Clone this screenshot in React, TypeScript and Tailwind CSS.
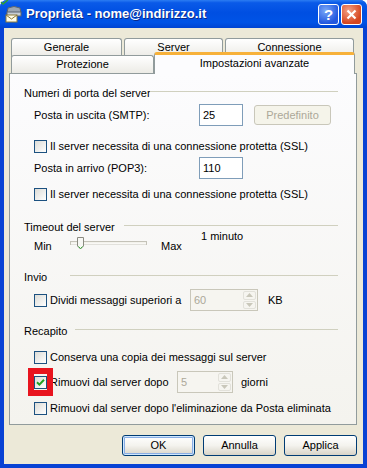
import React from 'react';

const font = "font-['Liberation_Sans',Arial,sans-serif]";

const Check = ({ checked = false }: { checked?: boolean }) => (
  <span className="w-[13px] h-[13px] shrink-0 border border-[#1C5180] bg-gradient-to-br from-[#DCDCD7] to-white flex items-center justify-center">
    {checked && (
      <svg width="9" height="9" viewBox="0 0 9 9">
        <path d="M1 4.2 L3.4 6.6 L8 1.8" fill="none" stroke="#21A121" strokeWidth="2" />
      </svg>
    )}
  </span>
);

const CheckRow = ({ label, checked = false }: { label: string; checked?: boolean }) => (
  <div className="flex items-center h-[16px] pl-[10px] gap-[3px]">
    <Check checked={checked} />
    <span className="whitespace-nowrap">{label}</span>
  </div>
);

// group title with the etched line on its right
const GroupHeader = ({ label, labelW }: { label: string; labelW: string }) => (
  <div className="flex items-center h-[14px] pr-[18px]">
    <span className={`${labelW} shrink-0 whitespace-nowrap`}>{label}</span>
    <div className="flex-1 h-px bg-[#D0D0BF] -mt-[3px]" />
  </div>
);

const TextBox = ({ value }: { value: string }) => (
  <div className="w-[44px] h-[22px] border border-[#7F9DB9] bg-white flex items-center pl-[3px]">{value}</div>
);

const Spinner = ({ value, w }: { value: string; w: string }) => (
  <div className={`${w} h-[22px] border border-[#C9C7BA] bg-[#F6F5F0] flex`}>
    <div className="flex-1 flex items-center pl-[3px] text-[#ACA899]">{value}</div>
    <div className="w-[15px] flex flex-col p-px gap-px">
      <div className="flex-1 border border-[#E2E1DA] rounded-[2px] flex items-center justify-center">
        <svg width="7" height="4" viewBox="0 0 7 4"><path d="M0 4 L3.5 0 L7 4Z" fill="#C9C7BA" /></svg>
      </div>
      <div className="flex-1 border border-[#E2E1DA] rounded-[2px] flex items-center justify-center">
        <svg width="7" height="4" viewBox="0 0 7 4"><path d="M0 0 L3.5 4 L7 0Z" fill="#C9C7BA" /></svg>
      </div>
    </div>
  </div>
);

const Tab = ({ label, w }: { label: string; w: string }) => (
  <div className={`${w} h-full border border-b-0 border-[#919B9C] rounded-t-[3px] bg-gradient-to-b from-white to-[#ECEBE6] flex items-center justify-center pb-[2px]`}>
    {label}
  </div>
);

const DlgButton = ({ label, isDefault = false }: { label: string; isDefault?: boolean }) => (
  <button
    className={`w-[73px] h-[21px] border border-[#003C74] rounded-[3px] bg-gradient-to-b from-white via-[#F4F3EE] to-[#D8D4C8] flex items-center justify-center ${
      isDefault ? 'shadow-[inset_0_0_0_1px_#CEE7FF,inset_0_0_0_2px_#89ADE4]' : ''
    }`}
  >
    {label}
  </button>
);

const TitleIcon = () => (
  <svg width="18" height="17" viewBox="0 0 18 17">
    <path d="M3 2 Q9 -1 15 2 L16 7 L2 7 Z" fill="#9DA7B2" stroke="#5B6570" strokeWidth="1" />
    <rect x="2" y="6" width="14" height="4" fill="#C6CDD4" stroke="#5B6570" strokeWidth="1" />
    <rect x="1" y="9" width="11" height="7" fill="#FFFDE8" stroke="#8C7A3A" strokeWidth="1" />
    <path d="M1 9 L6.5 13 L12 9" fill="none" stroke="#8C7A3A" strokeWidth="1" />
  </svg>
);

export default function App() {
  return (
    <div className={`${font} text-[11px] text-black bg-white w-[367px] h-[468px] relative`}>
      <svg className="absolute left-0 top-0 z-20" width="9" height="5" viewBox="0 0 9 5">
        <path d="M1 2 L3 4 L8 0" fill="none" stroke="#2FA02F" strokeWidth="1.5" />
      </svg>
      <div className="w-[367px] h-[468px] flex flex-col rounded-t-[7px] overflow-hidden bg-[#0842D4]">
        {/* title bar */}
        <div className="h-[28px] shrink-0 flex items-center pl-[5px] pr-[5px] bg-[linear-gradient(180deg,#2C7DF2_0%,#0A5AE8_10%,#004FE2_45%,#0053E6_80%,#0044D2_100%)]">
          <TitleIcon />
          <span className="ml-[3px] text-[13px] font-bold text-white [text-shadow:1px_1px_0_#0A2A8A] whitespace-nowrap">
            Proprietà - nome@indirizzo.it
          </span>
          <div className="flex-1" />
          <div className="w-[21px] h-[21px] rounded-[3px] border border-white bg-[radial-gradient(circle_at_35%_30%,#7AA8F8,#2358DF_70%)] flex items-center justify-center text-white font-bold text-[15px] leading-none">
            ?
          </div>
          <div className="ml-[2px] w-[21px] h-[21px] rounded-[3px] border border-white bg-[radial-gradient(circle_at_35%_30%,#F4A185,#D6461F_70%)] flex items-center justify-center">
            <svg width="11" height="11" viewBox="0 0 11 11">
              <path d="M1.5 1.5 L9.5 9.5 M9.5 1.5 L1.5 9.5" stroke="white" strokeWidth="2.2" />
            </svg>
          </div>
        </div>

        {/* body */}
        <div className="mx-[4px] h-[436px] bg-[#ECE9D8] flex flex-col pl-[5px] pr-[6px] pt-[10px]">
          {/* tabs */}
          <div className="h-[19px] flex pl-[2px] gap-[2px]">
            <Tab label="Generale" w="w-[111px]" />
            <Tab label="Server" w="w-[99px]" />
            <Tab label="Connessione" w="w-[129px]" />
          </div>
          <div className="h-[17px] flex items-end pl-[2px] relative z-10 -mt-px">
            <div className="w-[143px] h-[18px] border border-b-0 border-[#919B9C] rounded-t-[3px] bg-gradient-to-b from-white to-[#ECEBE6] flex items-center justify-center">
              Protezione
            </div>
            <div className="w-[201px] h-[22px] -mb-px border border-b-0 border-[#919B9C] border-t-[3px] border-t-[#F7B13A] rounded-t-[3px] bg-[#FCFCFE] flex items-center justify-center pb-[2px]">
              Impostazioni avanzate
            </div>
          </div>

          {/* panel */}
          <div className="h-[352px] border border-[#919B9C] bg-gradient-to-b from-[#FCFCFE] to-[#F4F3EE] flex flex-col pl-[14px] pt-[12px]">
            <GroupHeader label="Numeri di porta del server" labelW="w-[126px]" />
            <div className="mt-[4px] h-[22px] flex items-center">
              <span className="pl-[10px] w-[175px]">Posta in uscita (SMTP):</span>
              <TextBox value="25" />
              <div className="ml-[11px] w-[77px] h-[20px] border border-[#C9C7BA] rounded-[3px] bg-[#F5F4EA] text-[#ACA899] flex items-center justify-center">
                Predefinito
              </div>
            </div>
            <div className="mt-[12px]">
              <CheckRow label="Il server necessita di una connessione protetta (SSL)" />
            </div>
            <div className="mt-[3px] h-[22px] flex items-center">
              <span className="pl-[10px] w-[175px]">Posta in arrivo (POP3):</span>
              <TextBox value="110" />
            </div>
            <div className="mt-[7px]">
              <CheckRow label="Il server necessita di una connessione protetta (SSL)" />
            </div>

            <div className="mt-[18px]">
              <GroupHeader label="Timeout del server" labelW="w-[100px]" />
            </div>
            <div className="-mt-[4px] h-[22px] flex">
              <span className="pl-[10px] w-[46px] self-end leading-[12px]">Min</span>
              <svg className="self-end mb-[1px]" width="77" height="15" viewBox="0 0 77 15">
                <rect x="0.5" y="5.5" width="76" height="3" fill="#F3F2EC" stroke="#C4C2B8" />
                <line x1="1" y1="8" x2="76" y2="8" stroke="#FFFFFF" />
                <path d="M7.5 1.5 H13.5 V10 L10.5 13 L7.5 10 Z" fill="#F7F7F4" stroke="#8A8A80" />
                <path d="M8.5 10.5 L10.5 12.5 L12.5 10.5" fill="none" stroke="#3FB43F" />
              </svg>
              <span className="ml-[14px] w-[40px] self-end leading-[12px]">Max</span>
              <span className="self-start leading-[12px]">1 minuto</span>
            </div>

            <div className="mt-[18px]">
              <GroupHeader label="Invio" labelW="w-[46px]" />
            </div>
            <div className="mt-[5px] h-[22px] flex items-center">
              <div className="w-[166px]">
                <CheckRow label="Dividi messaggi superiori a" />
              </div>
              <Spinner value="60" w="w-[68px]" />
              <span className="ml-[10px]">KB</span>
            </div>

            <div className="mt-[13px]">
              <GroupHeader label="Recapito" labelW="w-[51px]" />
            </div>
            <div className="mt-[11px]">
              <CheckRow label="Conserva una copia dei messaggi sul server" />
            </div>
            <div className="mt-[6px] h-[22px] flex items-center relative">
              <div className="w-[153px]">
                <CheckRow label="Rimuovi dal server dopo" checked />
              </div>
              <Spinner value="5" w="w-[56px]" />
              <span className="ml-[8px]">giorni</span>
              {/* red highlight frame */}
              <div className="absolute left-[4px] top-[-3px] w-[25px] h-[28px] border-[6px] border-[#E8141E]" />
            </div>
            <div className="mt-[7px]">
              <CheckRow label="Rimuovi dal server dopo l'eliminazione da Posta eliminata" />
            </div>
          </div>

          {/* dialog buttons */}
          <div className="mt-[10px] flex justify-end gap-[8px]">
            <DlgButton label="OK" isDefault />
            <DlgButton label="Annulla" />
            <DlgButton label="Applica" />
          </div>
        </div>
      </div>
    </div>
  );
}
